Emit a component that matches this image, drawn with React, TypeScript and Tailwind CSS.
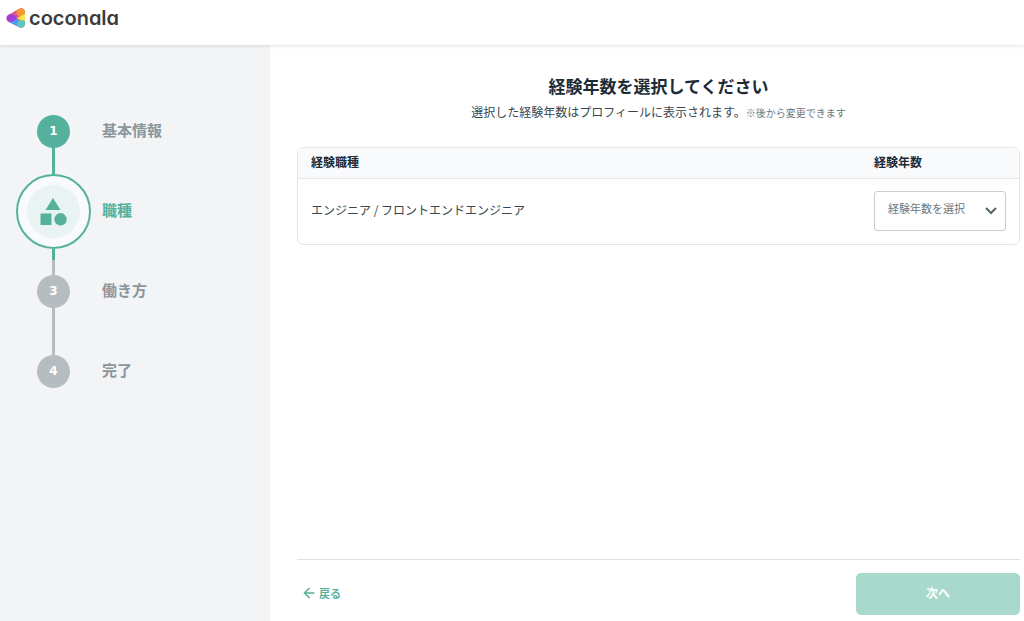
import clsx from 'clsx';

type StepStatus = 'done' | 'current' | 'todo';

interface Step {
  id: number;
  label: string;
  status: StepStatus;
}

const steps: Step[] = [
  { id: 1, label: '基本情報', status: 'done' },
  { id: 2, label: '職種', status: 'current' },
  { id: 3, label: '働き方', status: 'todo' },
  { id: 4, label: '完了', status: 'todo' },
];

const years = ['1年未満', '1年', '2年', '3年', '4年', '5年以上'];

function Logo() {
  return (
    <a href="#" className="flex items-center gap-1 text-[#3c3c3c]">
      <svg viewBox="0 0 57 60" className="h-5 w-[19px]" aria-hidden="true">
        <defs>
          <clipPath id="mark">
            <path d="M8 20 L38 3 C47 -3 57 3 57 12 V48 C57 57 47 63 38 57 L8 41 C-1 36 -1 25 8 20Z" />
          </clipPath>
        </defs>
        <g clipPath="url(#mark)">
          <rect width="57" height="60" fill="#e8508a" />
          <path d="M35 0H57V24C52 29 44 29 34 20C30 14 30 6 35 0Z" fill="#f29a35" />
          <path d="M57 18V44L32 30Z" fill="#fbe44a" />
          <path d="M57 38V60H35C30 54 31 45 36 40C43 35 52 35 57 38Z" fill="#5fc9b8" />
          <path d="M8 42L30 30L38 38C32 44 31 54 35 60Z" fill="#4a9df5" />
          <path d="M10 18C22 18 30 24 33 30C30 36 22 42 10 42H-2V18Z" fill="#a13fd8" />
        </g>
      </svg>
      <span className="font-[Inter,sans-serif] text-xl leading-6 font-semibold [font-feature-settings:'cv11']">
        coconala
      </span>
    </a>
  );
}

function StepIcon({ step }: { step: Step }) {
  if (step.status === 'current') {
    return (
      <span className="flex size-[75px] items-center justify-center rounded-full border-2 border-[#55b19b] bg-[#f9fafc]">
        <span className="flex size-[53px] items-center justify-center rounded-full bg-[#e9f3f1]">
          <svg viewBox="0 0 27 28" className="h-7 w-[27px] fill-[#55b19b]" aria-hidden="true">
            <path d="M13 0L20.500 12H5.500Z" />
            <path d="M0.500 15.500H11.500V27H0.500Z" />
            <circle cx="20.500" cy="21.300" r="6.200" />
          </svg>
        </span>
      </span>
    );
  }

  return (
    <span
      className={clsx(
        "flex size-[33px] items-center justify-center rounded-full pb-0.5 font-['DejaVu_Sans',sans-serif] text-xs font-bold text-white",
        step.status === 'done' ? 'bg-[#55b19b]' : 'bg-[#b6bdc0]'
      )}
    >
      {step.id}
    </span>
  );
}

function Connector({ status }: { status: StepStatus }) {
  return (
    <div className="flex w-[75px] flex-col items-center">
      {status === 'done' && <div className="h-[26px] w-[3px] bg-[#55b19b]" />}
      {status === 'current' && (
        <>
          <div className="h-[11px] w-[3px] bg-[#55b19b]" />
          <div className="h-[15px] w-[3px] bg-[#b6bdc0]" />
        </>
      )}
      {status === 'todo' && <div className="h-[47px] w-[3px] bg-[#b6bdc0]" />}
    </div>
  );
}

function Sidebar() {
  return (
    <aside className="w-[270px] shrink-0 bg-[#f2f4f6] pt-[70px] pl-4">
      <ol>
        {steps.map((step, index) => (
          <li key={step.id}>
            <div className="flex items-center gap-[11px]">
              <div className="flex w-[75px] justify-center">
                <StepIcon step={step} />
              </div>
              <span
                className={clsx(
                  'pb-1 text-[15px] leading-5 font-bold',
                  step.status === 'current' ? 'text-[#55b19b]' : 'text-[#8a969b]'
                )}
              >
                {step.label}
              </span>
            </div>
            {index < steps.length - 1 && <Connector status={step.status} />}
          </li>
        ))}
      </ol>
    </aside>
  );
}

function YearsSelect() {
  return (
    <div className="relative">
      <select
        aria-label="経験年数"
        defaultValue=""
        className="block h-10 w-full appearance-none rounded-[3px] border border-[#c9cfd2] bg-white pr-8 pb-1 pl-[13px] text-[11px] text-[#6b777d]"
      >
        <option value="">経験年数を選択</option>
        {years.map((year) => (
          <option key={year} value={year}>
            {year}
          </option>
        ))}
      </select>
      <svg
        viewBox="0 0 12 8"
        className="pointer-events-none absolute top-4 right-[9px] h-2 w-3 fill-none stroke-[#56646c] stroke-2"
        aria-hidden="true"
      >
        <path d="M1 1L6 6L11 1" />
      </svg>
    </div>
  );
}

export default function App() {
  return (
    <div className="flex min-h-screen flex-col bg-white font-['Noto_Sans_CJK_JP',sans-serif] text-[#1b2b36]">
      <header className="z-10 flex h-[45px] items-start bg-white px-1.5 pt-1.5 shadow-[0_1px_4px_rgba(0,0,0,0.12)]">
        <Logo />
      </header>

      <div className="flex flex-1">
        <Sidebar />

        <main className="flex flex-1 flex-col pt-[29px] pr-1 pb-1.5 pl-[27px]">
          <h1 className="text-center text-[17px] leading-6 font-bold">
            経験年数を選択してください
          </h1>
          <p className="mt-1 text-center text-xs leading-5 text-[#37474f]">
            選択した経験年数はプロフィールに表示されます。
            <span className="text-[10px] text-[#6b777d]">※後から変更できます</span>
          </p>

          <div className="mt-6 overflow-hidden rounded-md border border-[#e3e7e9]">
            <table className="w-full table-fixed text-left text-xs">
              <thead>
                <tr className="border-b border-[#e3e7e9] bg-[#f9fafc]">
                  <th className="h-[30px] px-[13px] pb-0.5 font-bold">経験職種</th>
                  <th className="w-[158px] px-[13px] pb-0.5 font-bold">経験年数</th>
                </tr>
              </thead>
              <tbody>
                <tr>
                  <td className="px-[13px] pb-0.5 text-[#37474f]">
                    エンジニア / フロントエンドエンジニア
                  </td>
                  <td className="px-[13px] pt-3 pb-[13px]">
                    <YearsSelect />
                  </td>
                </tr>
              </tbody>
            </table>
          </div>

          <footer className="mt-auto flex items-center justify-between border-t border-[#dde1e3] pt-[13px]">
            <button
              type="button"
              className="flex items-center gap-1 px-1.5 pb-0.5 text-[11px] font-bold text-[#55b19b]"
            >
              <svg
                viewBox="0 0 12 12"
                className="size-3 fill-none stroke-current stroke-[1.5]"
                aria-hidden="true"
              >
                <path d="M11.500 6H1.500M6.500 1L1.500 6L6.500 11" />
              </svg>
              戻る
            </button>
            <button
              type="button"
              disabled
              className="h-[42px] w-[164px] rounded-[5px] bg-[#a9d8cc] pb-0.5 text-xs font-bold text-white"
            >
              次へ
            </button>
          </footer>
        </main>
      </div>
    </div>
  );
}
